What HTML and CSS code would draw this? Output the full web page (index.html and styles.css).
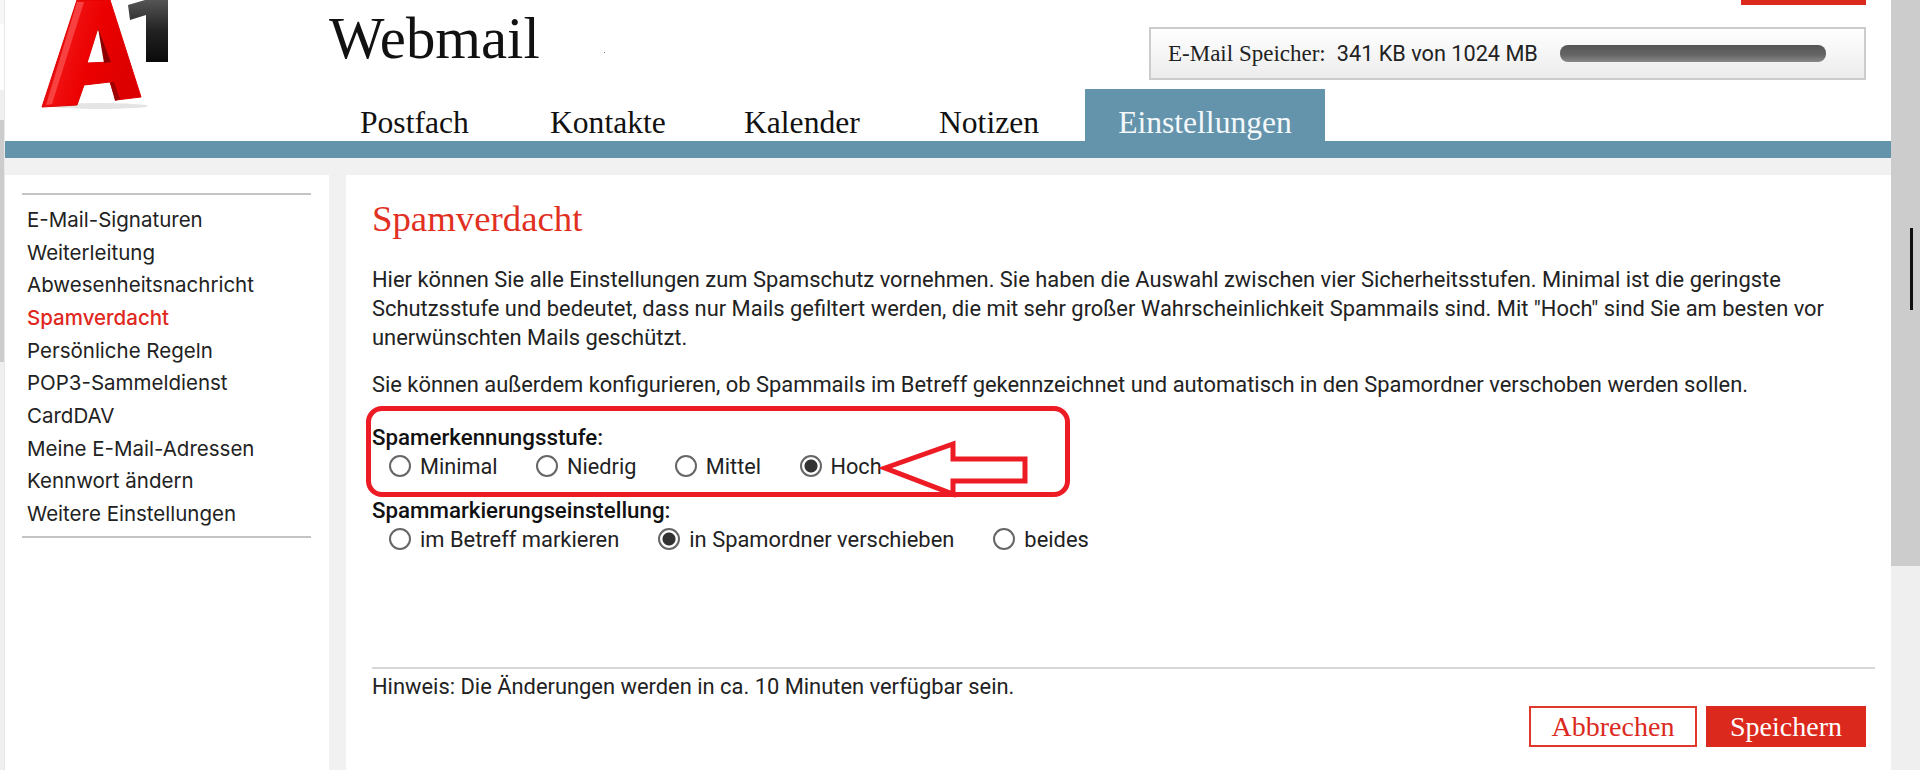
FILE: index.html
```html
<!DOCTYPE html>
<html lang="de">
<head>
    <meta charset="UTF-8">
    <meta name="viewport" content="width=device-width, initial-scale=1.0">
    <title>Webmail - Spamverdacht</title>
    <link rel="stylesheet" href="styles.css">
</head>
<body>
    <div class="edge-left"></div>

    <div class="page">
        <header class="header">
            <svg class="logo" width="130" height="112" viewBox="0 0 130 112" aria-label="A1">
                <defs>
                    <linearGradient id="logo-red" x1="0" y1="0" x2="1" y2="0.3">
                        <stop offset="0" stop-color="#c90000"/>
                        <stop offset="0.35" stop-color="#f01010"/>
                        <stop offset="0.6" stop-color="#ec0000"/>
                        <stop offset="1" stop-color="#dc0000"/>
                    </linearGradient>
                    <linearGradient id="logo-black" x1="0" y1="0" x2="0" y2="1">
                        <stop offset="0" stop-color="#555"/>
                        <stop offset="0.5" stop-color="#222"/>
                        <stop offset="1" stop-color="#0a0a0a"/>
                    </linearGradient>
                </defs>
                <ellipse cx="60" cy="106" rx="48" ry="3" fill="#e4e4e4"/>
                <path d="M37 0H70L101 97L76 100L70 82L44 85L37 105L2 107ZM58 28L47 63L71 62Z" fill="url(#logo-red)" fill-rule="evenodd" stroke="#e00000" stroke-linejoin="round"/>
                <path d="M37 2L44 2L12 104L6 105Z" fill="#ff6a6a" opacity="0.55"/>
                <path d="M58 28L71 62L64 63Z" fill="#8e0000"/>
                <path d="M70 82L75 101L80 99L74 82Z" fill="#a00000"/>
                <path d="M88 5L105 0H128V62H106V15L90 20Z" fill="url(#logo-black)"/>
            </svg>

            <div class="header-right">
                <div class="header-top">
                    <div class="site-title">Webmail</div>
                    <span class="speck"></span>
                    <div class="account">
                        <div class="account-btn"></div>
                        <div class="storage">
                            <span class="storage-label">E-Mail Speicher:</span>
                            <span class="storage-value">341 KB von 1024 MB</span>
                            <span class="storage-bar"></span>
                        </div>
                    </div>
                </div>
                <nav class="tabs">
                    <a class="tab" href="#">Postfach</a>
                    <a class="tab" href="#">Kontakte</a>
                    <a class="tab" href="#">Kalender</a>
                    <a class="tab" href="#">Notizen</a>
                    <a class="tab active" href="#">Einstellungen</a>
                </nav>
            </div>
        </header>

        <div class="tab-bar"></div>

        <div class="main">
            <aside class="sidebar">
                <ul class="side-menu">
                    <li><a href="#">E-Mail-Signaturen</a></li>
                    <li><a href="#">Weiterleitung</a></li>
                    <li><a href="#">Abwesenheitsnachricht</a></li>
                    <li><a class="current" href="#">Spamverdacht</a></li>
                    <li><a href="#">Persönliche Regeln</a></li>
                    <li><a href="#">POP3-Sammeldienst</a></li>
                    <li><a href="#">CardDAV</a></li>
                    <li><a href="#">Meine E-Mail-Adressen</a></li>
                    <li><a href="#">Kennwort ändern</a></li>
                    <li><a href="#">Weitere Einstellungen</a></li>
                </ul>
            </aside>

            <section class="content">
                <h1>Spamverdacht</h1>
                <p class="intro">Hier können Sie alle Einstellungen zum Spamschutz vornehmen. Sie haben die Auswahl zwischen vier Sicherheitsstufen. Minimal ist die geringste Schutzsstufe und bedeutet, dass nur Mails gefiltert werden, die mit sehr großer Wahrscheinlichkeit Spammails sind. Mit "Hoch" sind Sie am besten vor unerwünschten Mails geschützt.</p>
                <p class="intro second">Sie können außerdem konfigurieren, ob Spammails im Betreff gekennzeichnet und automatisch in den Spamordner verschoben werden sollen.</p>

                <div class="highlight">
                    <div class="field-label">Spamerkennungsstufe:</div>
                    <div class="radio-row">
                        <label class="radio"><input type="radio" name="level"> Minimal</label>
                        <label class="radio"><input type="radio" name="level"> Niedrig</label>
                        <label class="radio"><input type="radio" name="level"> Mittel</label>
                        <label class="radio"><input type="radio" name="level" checked> Hoch</label>
                    </div>
                    <svg class="arrow" width="150" height="60" viewBox="0 0 150 60">
                        <path d="M6 28L74 4V19H146V41H74V54Z" fill="none" stroke="#ed1c24" stroke-width="5"/>
                    </svg>
                </div>

                <div class="field-label below">Spammarkierungseinstellung:</div>
                <div class="radio-row">
                    <label class="radio"><input type="radio" name="mark"> im Betreff markieren</label>
                    <label class="radio"><input type="radio" name="mark" checked> in Spamordner verschieben</label>
                    <label class="radio"><input type="radio" name="mark"> beides</label>
                </div>

                <div class="footer">
                    <div class="hint">Hinweis: Die Änderungen werden in ca. 10 Minuten verfügbar sein.</div>
                    <div class="actions">
                        <button class="btn btn-outline" type="button">Abbrechen</button>
                        <button class="btn btn-primary" type="button">Speichern</button>
                    </div>
                </div>
            </section>
        </div>
    </div>

    <div class="edge-right">
        <span class="edge-mark"></span>
    </div>
</body>
</html>
```

FILE: styles.css
```css
* {
    margin: 0;
    padding: 0;
    box-sizing: border-box;
}

body {
    display: flex;
    height: 770px;
    overflow: hidden;
    background: #f1f1f1;
    color: #222;
    font-family: Roboto, 'Liberation Sans', sans-serif;
}

a {
    color: inherit;
    text-decoration: none;
}

.edge-left {
    width: 5px;
    flex-shrink: 0;
    border-right: 1px solid #e8e8e8;
    background: linear-gradient(to bottom, #f6f6f6 0, #f6f6f6 24px, #fdfdfd 24px, #fdfdfd 90px, #efefef 90px, #efefef 120px, #ccc 120px, #ccc 362px, #efefef 362px);
}

.edge-right {
    width: 29px;
    flex-shrink: 0;
    padding: 228px 0 0 19px;
    background: linear-gradient(to bottom, #ccc 0, #ccc 566px, #efefef 566px);
}

.edge-mark {
    display: block;
    width: 3px;
    height: 82px;
    background: #111;
}

.page {
    flex: 1;
    min-width: 0;
    display: flex;
    flex-direction: column;
}

/* header */
.header {
    display: flex;
    height: 141px;
    background: white;
}

.logo {
    flex-shrink: 0;
    margin-left: 35px;
}

.header-right {
    flex: 1;
    display: flex;
    flex-direction: column;
    margin-left: 159px;
}

.header-top {
    height: 89px;
    display: flex;
}

.site-title {
    margin-top: 5px;
    height: 68px;
    font-family: 'Liberation Serif', serif;
    font-size: 58.8px;
    line-height: 68px;
    color: #111;
}

.speck {
    width: 1px;
    height: 1px;
    margin: 52px 0 0 64px;
    background: #777;
}

.account {
    margin-left: auto;
    margin-right: 25px;
    width: 717px;
    display: flex;
    flex-direction: column;
    align-items: flex-end;
}

.account-btn {
    width: 125px;
    height: 5px;
    background: #dc291e;
}

.storage {
    width: 717px;
    height: 53px;
    margin-top: 22px;
    padding: 0 38px 0 17px;
    display: flex;
    align-items: center;
    border: 2px solid #ccc;
    background: linear-gradient(to bottom, #fff, #ececec);
}

.storage-label {
    font-family: 'Liberation Serif', serif;
    font-size: 23px;
    color: #222;
}

.storage-value {
    margin-left: 11px;
    font-size: 21.7px;
    color: #222;
}

.storage-bar {
    margin-left: auto;
    width: 266px;
    height: 17px;
    border-radius: 8px;
    background: linear-gradient(to bottom, #555, #666 60%, #888);
}

.tabs {
    height: 52px;
    display: grid;
    grid-template-columns: 190px 194px 195px 146px 240px;
    padding-left: 31px;
}

.tab {
    padding-top: 14px;
    font-family: 'Liberation Serif', serif;
    font-size: 31.6px;
    line-height: 40px;
    color: #111;
}

.tab.active {
    background: #6394ac;
    color: #f4f8fa;
    text-align: center;
}

.tab-bar {
    height: 17px;
    background: #6394ac;
}

/* body columns */
.main {
    flex: 1;
    min-height: 0;
    display: flex;
    gap: 17px;
    margin-top: 17px;
}

.sidebar {
    width: 324px;
    flex-shrink: 0;
    padding: 18px 18px 0 17px;
    background: white;
}

.side-menu {
    list-style: none;
    padding: 9px 0 5px 5px;
    border-top: 2px solid #c4c4c4;
    border-bottom: 2px solid #c4c4c4;
    font-family: Inter, Roboto, sans-serif;
    font-size: 20.5px;
    line-height: 32.67px;
}

.side-menu .current {
    color: #e0281e;
    font-weight: 500;
}

.content {
    flex: 1;
    min-width: 0;
    display: flex;
    flex-direction: column;
    padding: 22px 0 0 26px;
    background: white;
}

.content h1 {
    font-family: 'Liberation Serif', serif;
    font-size: 36.8px;
    line-height: 44px;
    font-weight: normal;
    color: #e1301f;
    margin-bottom: 24px;
}

.intro {
    font-size: 21.9px;
    line-height: 29px;
    width: 1470px;
}

.intro.second {
    margin-top: 18px;
}

.highlight {
    position: relative;
    width: 704px;
    height: 91px;
    margin: 7px 0 0 -6px;
    padding-top: 12px;
    border: 5px solid #ed1c24;
    border-radius: 16px;
}

.arrow {
    position: absolute;
    left: 508px;
    top: 29px;
}

.field-label {
    font-size: 22.3px;
    line-height: 28px;
    font-weight: 500;
    color: #111;
}

.highlight .field-label {
    padding-left: 1px;
}

.field-label.below {
    margin-top: -1px;
}

.radio-row {
    display: flex;
    gap: 39px;
    margin-top: 2px;
    padding-left: 17px;
    height: 28px;
    align-items: center;
}

.highlight .radio-row {
    gap: 38.5px;
    padding-left: 18px;
}

.radio {
    display: flex;
    align-items: center;
    gap: 9px;
    font-size: 21.9px;
    line-height: 28px;
}

.highlight .radio {
    font-size: 21.7px;
}

.radio input {
    appearance: none;
    width: 22px;
    height: 22px;
    margin-top: -3px;
    border: 2px solid #666;
    border-radius: 50%;
    background: white;
}

.radio input:checked {
    background: radial-gradient(circle, #333 0, #333 6px, white 7px);
}

.footer {
    margin-top: auto;
    margin-right: 16px;
    padding: 4px 9px 23px 0;
    border-top: 2px solid #d8d8d8;
}

.hint {
    font-size: 21.9px;
    line-height: 28px;
}

.actions {
    display: flex;
    justify-content: flex-end;
    gap: 9px;
    margin-top: 5px;
}

.btn {
    height: 41px;
    font-family: 'Liberation Serif', serif;
    font-size: 28px;
}

.btn-outline {
    width: 168px;
    border: 2px solid #e0382c;
    background: white;
    color: #dc291e;
}

.btn-primary {
    width: 160px;
    border: none;
    background: #dc291e;
    color: white;
}
```
